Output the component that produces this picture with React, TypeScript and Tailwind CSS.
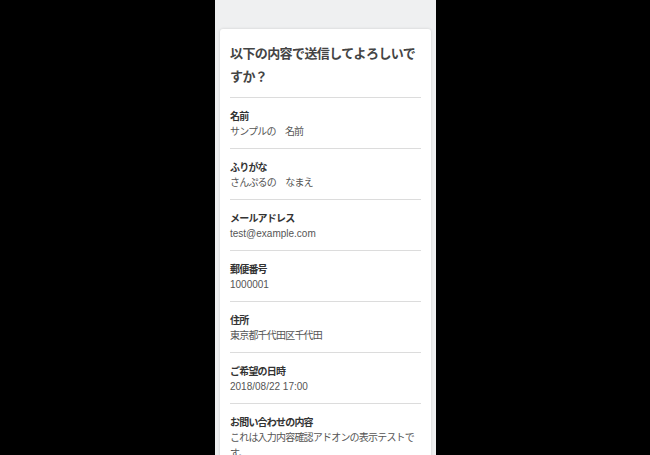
import React from "react";

const rows: { label: string; value: string; latin?: boolean }[] = [
  { label: "名前", value: "サンプルの　名前" },
  { label: "ふりがな", value: "さんぷるの　なまえ" },
  { label: "メールアドレス", value: "test@example.com", latin: true },
  { label: "郵便番号", value: "1000001", latin: true },
  { label: "住所", value: "東京都千代田区千代田" },
  { label: "ご希望の日時", value: "2018/08/22 17:00", latin: true },
  { label: "お問い合わせの内容", value: "これは入力内容確認アドオンの表示テストです。" },
];

export default function App() {
  return (
    <div
      className="w-[650px] h-[455px] overflow-hidden bg-black flex justify-center"
      style={{ fontFamily: '"Liberation Sans", "Noto Sans CJK JP", sans-serif' }}
    >
      <div className="w-[221px] h-full bg-[#eff0f1] px-[5px] pt-[29px] ml-[1px]">
        <div className="bg-white rounded-[3px] shadow-[0_0_3px_rgba(0,0,0,0.15)] px-[10px] pt-[13px]">
          <h1 className="text-[13px] leading-[23px] font-bold text-[#444] tracking-[-0.6px] pb-[9px] border-b border-[#dcdcdc]">
            以下の内容で送信してよろしいですか？
          </h1>
          {rows.map((r) => (
            <div key={r.label} className="pt-[12px] pb-[8px] border-b border-[#dcdcdc]">
              <div className="text-[10px] leading-[14px] font-bold text-[#333] tracking-[-0.8px]">
                {r.label}
              </div>
              <div
                className={
                  r.latin
                    ? "text-[10px] leading-[16px] text-[#555]"
                    : "text-[10px] leading-[16px] text-[#555] tracking-[-0.8px]"
                }
              >
                {r.value}
              </div>
            </div>
          ))}
        </div>
      </div>
    </div>
  );
}
